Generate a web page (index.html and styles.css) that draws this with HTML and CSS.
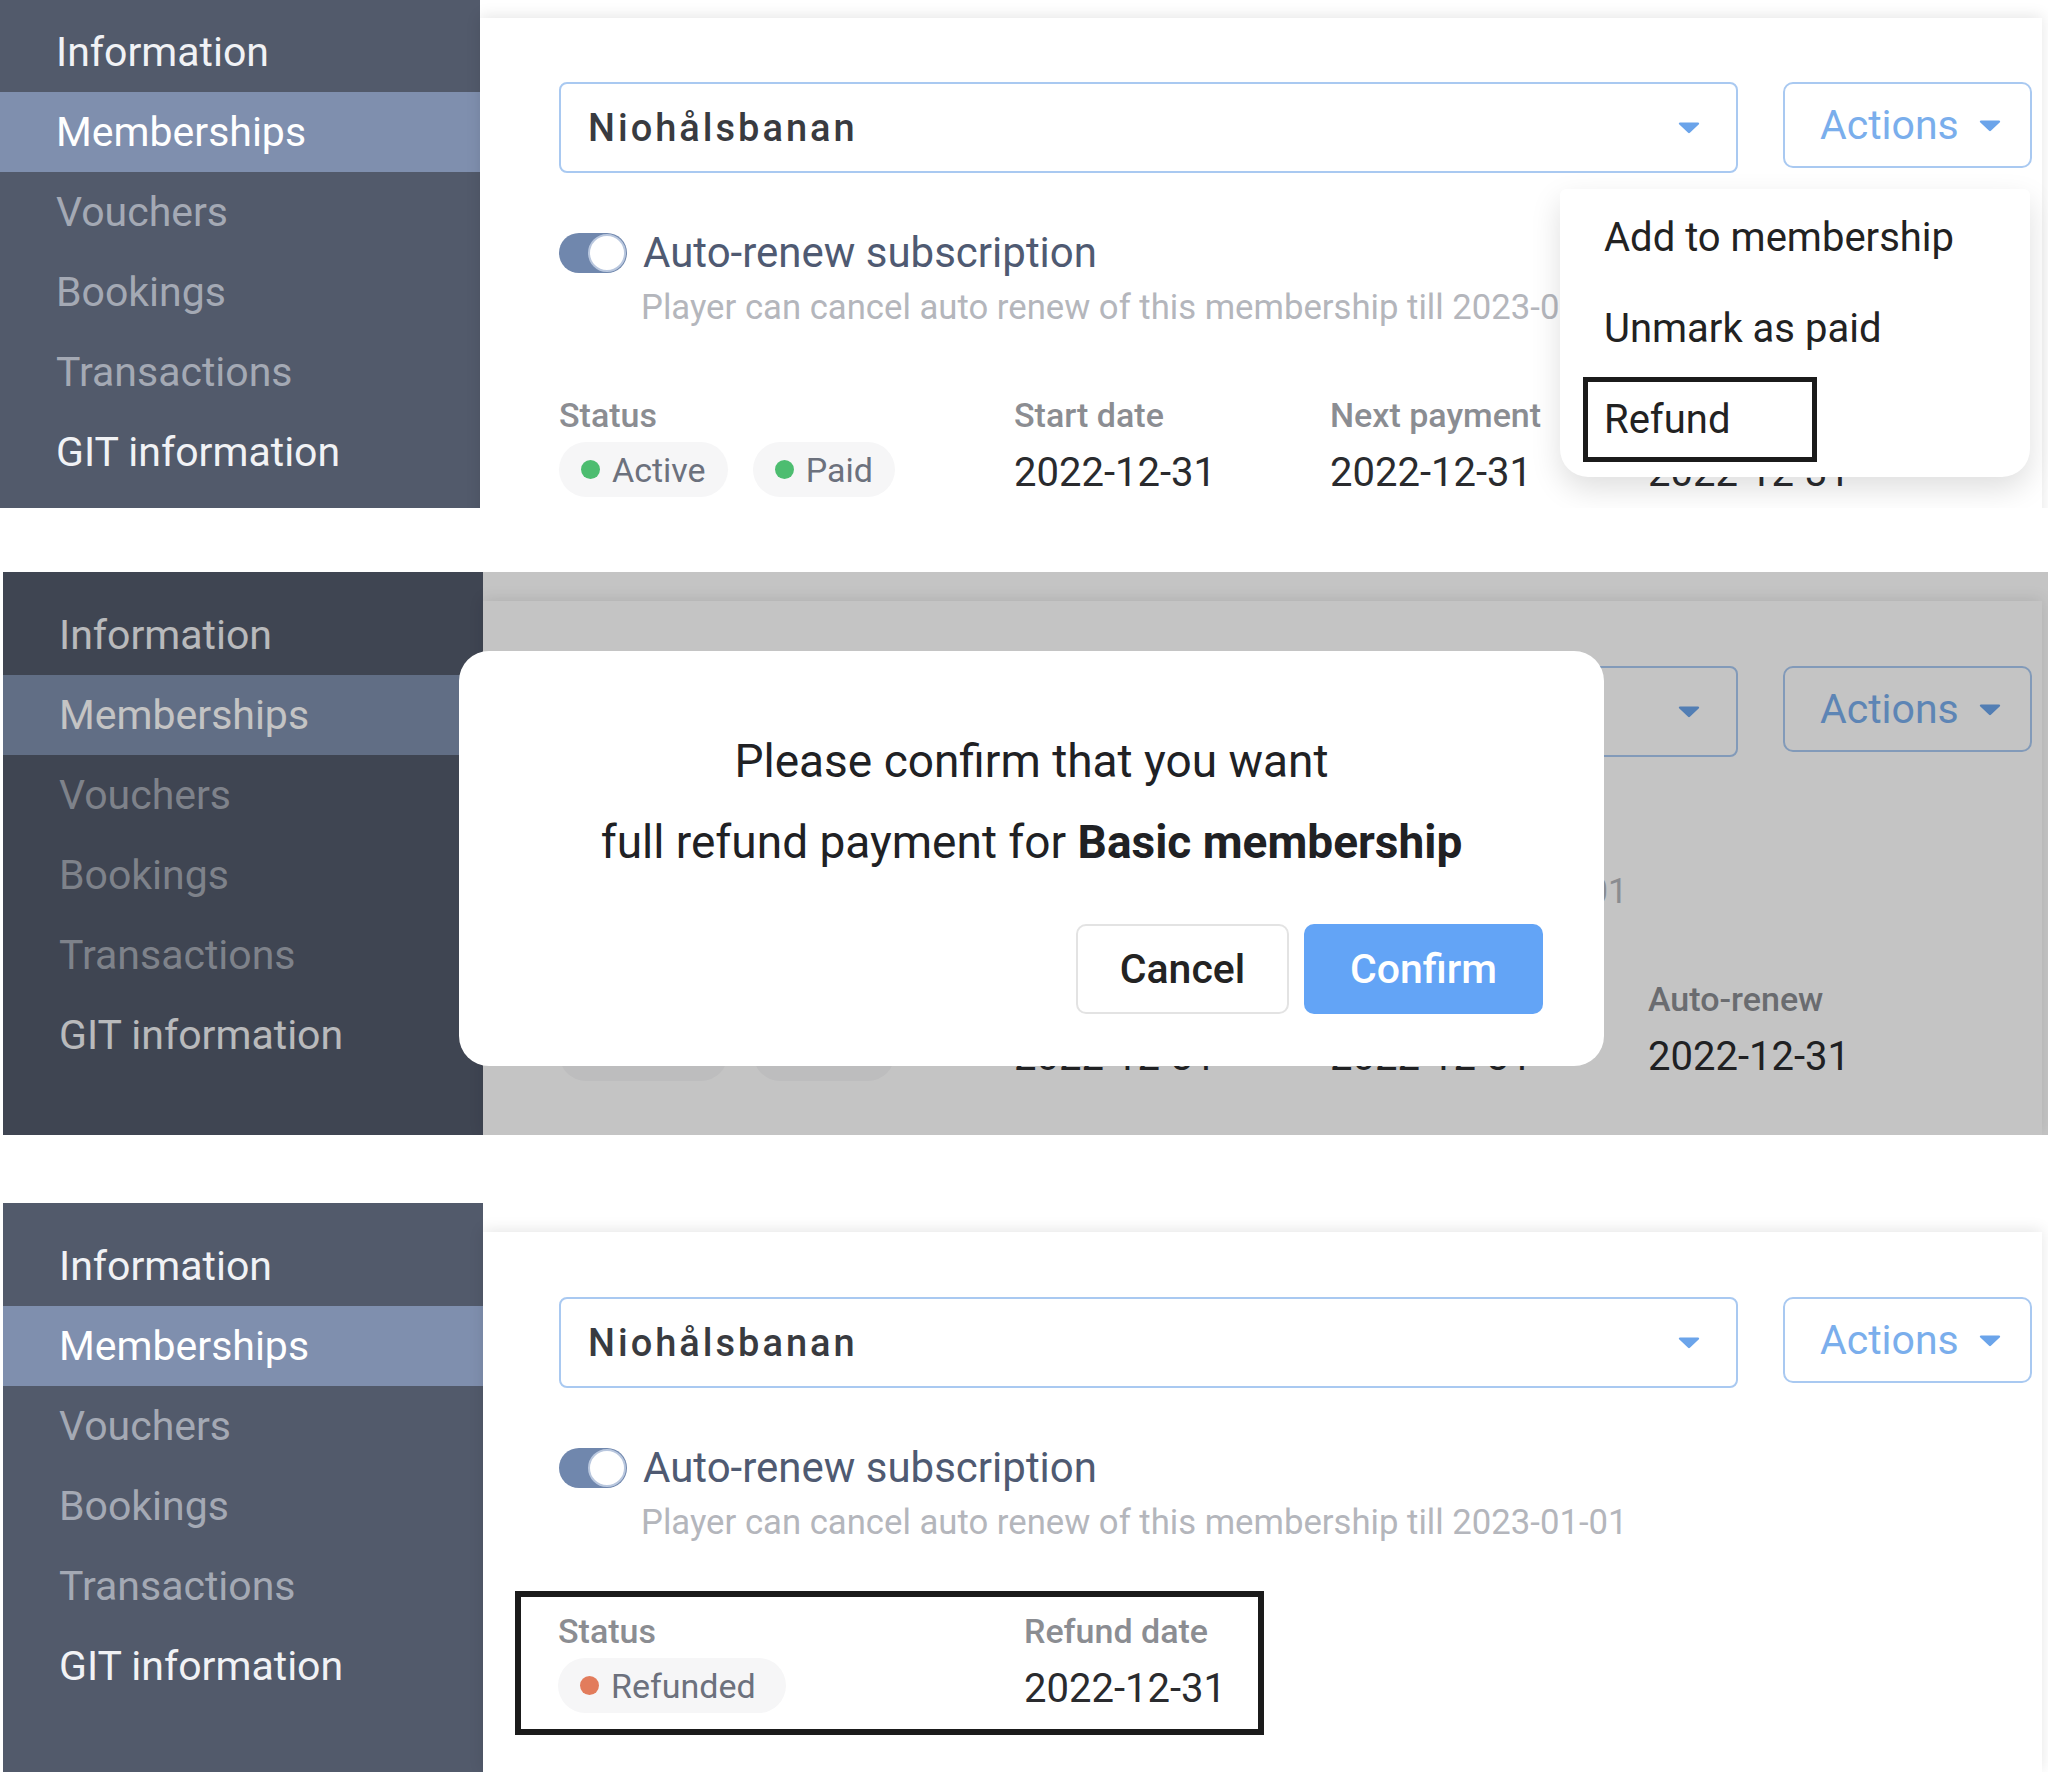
FILE: index.html
```html
<!DOCTYPE html>
<html lang="en">
<head>
  <meta charset="UTF-8" />
  <meta name="viewport" content="width=device-width, initial-scale=1.0"/>
  <title>Memberships – refund flow</title>
  <link rel="stylesheet" href="styles.css">
</head>
<body>

  <!-- step 1: actions menu open -->
  <div class="shot shot-top">
    <section class="panel panel-first">
      <nav class="sidebar">
        <a class="nav-item">Information</a>
        <a class="nav-item active">Memberships</a>
        <a class="nav-item muted">Vouchers</a>
        <a class="nav-item muted">Bookings</a>
        <a class="nav-item muted">Transactions</a>
        <a class="nav-item">GIT information</a>
      </nav>
      <main class="main">
        <div class="card">
          <div class="toolbar">
            <div class="select">
              <span class="select-value">Niohålsbanan</span>
              <svg class="caret" width="22" height="13" viewBox="0 0 22 13"><path d="M2 1.5h18c1 0 1.5 1 .9 1.7l-9 8.6c-.5.5-1.3.5-1.8 0l-9-8.6C.5 2.5 1 1.5 2 1.5z"/></svg>
            </div>
            <div class="actions-wrap">
              <button class="actions">Actions
                <svg class="caret" width="22" height="13" viewBox="0 0 22 13"><path d="M2 1.5h18c1 0 1.5 1 .9 1.7l-9 8.6c-.5.5-1.3.5-1.8 0l-9-8.6C.5 2.5 1 1.5 2 1.5z"/></svg>
              </button>
              <ul class="menu">
                <li class="menu-item">Add to membership</li>
                <li class="menu-item">Unmark as paid</li>
                <li class="menu-item"><span class="marked">Refund</span></li>
              </ul>
            </div>
          </div>
          <div class="renew">
            <span class="toggle"></span>
            <span class="renew-label">Auto-renew subscription</span>
          </div>
          <p class="renew-hint">Player can cancel auto renew of this membership till 2023-01-01</p>
          <div class="details">
            <div class="field">
              <div class="field-label">Status</div>
              <div class="pills">
                <span class="pill"><i class="dot dot-green"></i>Active</span>
                <span class="pill"><i class="dot dot-green"></i>Paid</span>
              </div>
            </div>
            <div class="field">
              <div class="field-label">Start date</div>
              <div class="field-value">2022-12-31</div>
            </div>
            <div class="field">
              <div class="field-label">Next payment</div>
              <div class="field-value">2022-12-31</div>
            </div>
            <div class="field">
              <div class="field-label">Auto-renew</div>
              <div class="field-value">2022-12-31</div>
            </div>
          </div>
        </div>
      </main>
    </section>
  </div>

  <!-- step 2: confirm dialog -->
  <section class="panel panel-shifted panel-dialog">
    <nav class="sidebar">
      <a class="nav-item">Information</a>
      <a class="nav-item active">Memberships</a>
      <a class="nav-item muted">Vouchers</a>
      <a class="nav-item muted">Bookings</a>
      <a class="nav-item muted">Transactions</a>
      <a class="nav-item">GIT information</a>
    </nav>
    <main class="main">
      <div class="card">
        <div class="toolbar">
          <div class="select">
            <span class="select-value">Niohålsbanan</span>
            <svg class="caret" width="22" height="13" viewBox="0 0 22 13"><path d="M2 1.5h18c1 0 1.5 1 .9 1.7l-9 8.6c-.5.5-1.3.5-1.8 0l-9-8.6C.5 2.5 1 1.5 2 1.5z"/></svg>
          </div>
          <div class="actions-wrap">
            <button class="actions">Actions
              <svg class="caret" width="22" height="13" viewBox="0 0 22 13"><path d="M2 1.5h18c1 0 1.5 1 .9 1.7l-9 8.6c-.5.5-1.3.5-1.8 0l-9-8.6C.5 2.5 1 1.5 2 1.5z"/></svg>
            </button>
          </div>
        </div>
        <div class="renew">
          <span class="toggle"></span>
          <span class="renew-label">Auto-renew subscription</span>
        </div>
        <p class="renew-hint">Player can cancel auto renew of this membership till 2023-01-01</p>
        <div class="details">
          <div class="field">
            <div class="field-label">Status</div>
            <div class="pills">
              <span class="pill"><i class="dot dot-green"></i>Active</span>
              <span class="pill"><i class="dot dot-green"></i>Paid</span>
            </div>
          </div>
          <div class="field">
            <div class="field-label">Start date</div>
            <div class="field-value">2022-12-31</div>
          </div>
          <div class="field">
            <div class="field-label">Next payment</div>
            <div class="field-value">2022-12-31</div>
          </div>
          <div class="field">
            <div class="field-label">Auto-renew</div>
            <div class="field-value">2022-12-31</div>
          </div>
        </div>
      </div>
    </main>

    <div class="overlay">
      <div class="modal">
        <p class="modal-text">Please confirm that you want<br>full refund payment for <b>Basic membership</b></p>
        <div class="modal-buttons">
          <button class="btn btn-cancel">Cancel</button>
          <button class="btn btn-confirm">Confirm</button>
        </div>
      </div>
    </div>
  </section>

  <!-- step 3: refunded -->
  <section class="panel panel-shifted panel-last">
    <nav class="sidebar">
      <a class="nav-item">Information</a>
      <a class="nav-item active">Memberships</a>
      <a class="nav-item muted">Vouchers</a>
      <a class="nav-item muted">Bookings</a>
      <a class="nav-item muted">Transactions</a>
      <a class="nav-item">GIT information</a>
    </nav>
    <main class="main">
      <div class="card">
        <div class="toolbar">
          <div class="select">
            <span class="select-value">Niohålsbanan</span>
            <svg class="caret" width="22" height="13" viewBox="0 0 22 13"><path d="M2 1.5h18c1 0 1.5 1 .9 1.7l-9 8.6c-.5.5-1.3.5-1.8 0l-9-8.6C.5 2.5 1 1.5 2 1.5z"/></svg>
          </div>
          <div class="actions-wrap">
            <button class="actions">Actions
              <svg class="caret" width="22" height="13" viewBox="0 0 22 13"><path d="M2 1.5h18c1 0 1.5 1 .9 1.7l-9 8.6c-.5.5-1.3.5-1.8 0l-9-8.6C.5 2.5 1 1.5 2 1.5z"/></svg>
            </button>
          </div>
        </div>
        <div class="renew">
          <span class="toggle"></span>
          <span class="renew-label">Auto-renew subscription</span>
        </div>
        <p class="renew-hint">Player can cancel auto renew of this membership till 2023-01-01</p>
        <div class="details details-refunded">
          <div class="field">
            <div class="field-label">Status</div>
            <div class="pills">
              <span class="pill pill-wide"><i class="dot dot-orange"></i>Refunded</span>
            </div>
          </div>
          <div class="field">
            <div class="field-label">Refund date</div>
            <div class="field-value">2022-12-31</div>
          </div>
        </div>
      </div>
    </main>
  </section>

</body>
</html>
```

FILE: styles.css
```css
:root {
  --sidebar: #525a6b;
  --sidebar-active: #7f8fae;
  --blue: #6ba4ea;
  --blue-border: #a9c9f1;
  --text: #2a2b2e;
  --muted: #8b8d92;
}
body {
  margin: 0;
  width: 2048px;
  background: #fff;
  font-family: Roboto, 'Liberation Sans', sans-serif;
  color: var(--text);
}
button {
  font-family: inherit;
}

/* panels */
.shot-top {
  height: 508px;
  overflow: hidden;
}
.panel {
  position: relative;
  display: flex;
  height: 569px;
  overflow: hidden;
}
.panel-first {
  margin-top: -11px;
}
.panel-first .card {
  padding-top: 64px;
}
.panel-shifted {
  margin-left: 3px;
}
.panel-shifted .card {
  padding-left: 76px;
}
.panel-dialog {
  margin-top: 64px;
  height: 563px;
}
.panel-last {
  margin-top: 68px;
}

/* sidebar */
.sidebar {
  width: 480px;
  flex-shrink: 0;
  padding-top: 23px;
  background: var(--sidebar);
  box-sizing: border-box;
}
.nav-item {
  display: flex;
  align-items: center;
  height: 80px;
  padding-left: 56px;
  font-size: 41px;
  color: #f1f2f5;
}
.nav-item.active {
  background: var(--sidebar-active);
  color: #fff;
}
.nav-item.muted {
  color: #a4a9b4;
}

/* main card */
.main {
  flex: 1;
  padding-top: 29px;
  background: #fff;
}
.card {
  height: 100%;
  margin-right: 6px;
  padding: 65px 10px 0 79px;
  box-sizing: border-box;
  box-shadow: 0 -2px 14px rgba(0,0,0,0.1);
  background: #fff;
}
.toolbar {
  display: flex;
  align-items: flex-start;
  gap: 45px;
}
.select {
  flex: 1;
  display: flex;
  align-items: center;
  justify-content: space-between;
  height: 91px;
  padding: 0 36px 0 27px;
  border: 2px solid var(--blue-border);
  border-radius: 8px;
  box-sizing: border-box;
}
.select-value {
  font-size: 38px;
  font-weight: 500;
  letter-spacing: 3px;
  color: #393b40;
}
.caret {
  fill: var(--blue);
}
.actions-wrap {
  position: relative;
}
.actions {
  display: flex;
  align-items: center;
  gap: 20px;
  width: 249px;
  height: 86px;
  padding: 0 0 0 35px;
  border: 2px solid var(--blue-border);
  border-radius: 10px;
  background: #fff;
  font-size: 41px;
  color: #7aaeec;
  box-sizing: border-box;
}

/* dropdown */
.menu {
  position: absolute;
  top: 107px;
  right: 2px;
  width: 470px;
  margin: 0;
  padding: 3px 0 12px;
  list-style: none;
  background: #fff;
  border-radius: 6px 6px 28px 28px;
  box-shadow: 0 12px 30px rgba(0,0,0,0.13);
  z-index: 2;
}
.menu-item {
  display: flex;
  align-items: center;
  height: 91px;
  padding-left: 44px;
  font-size: 40px;
  color: #222;
}
.marked {
  display: flex;
  align-items: center;
  width: 234px;
  height: 85px;
  margin-left: -21px;
  padding-left: 16px;
  border: 5px solid #1b1b1b;
  box-sizing: border-box;
}

/* auto renew */
.renew {
  display: flex;
  align-items: center;
  gap: 16px;
  margin-top: 55px;
}
.toggle {
  position: relative;
  width: 68px;
  height: 40px;
  border-radius: 20px;
  background: #7087ad;
}
.toggle::after {
  content: '';
  position: absolute;
  top: 1px;
  right: 1px;
  width: 34px;
  height: 34px;
  border: 2px solid #b9c7de;
  border-radius: 50%;
  background: #fff;
}
.renew-label {
  font-size: 42px;
  color: #4f5a72;
}
.renew-hint {
  margin: 10px 0 0;
  padding-left: 82px;
  font-size: 34.7px;
  line-height: 40px;
  color: #b4b6bc;
  white-space: nowrap;
}

/* details */
.details {
  display: grid;
  grid-template-columns: 455px 316px 318px auto;
  margin-top: 70px;
}
.field {
  display: flex;
  flex-direction: column;
  gap: 9px;
}
.field-label {
  font-size: 34px;
  line-height: 36px;
  font-weight: 500;
  color: var(--muted);
}
.field-value {
  font-size: 40px;
  line-height: 55px;
  padding-top: 3px;
  color: var(--text);
}
.pills {
  display: flex;
  gap: 25px;
}
.pill {
  display: flex;
  align-items: center;
  gap: 12px;
  height: 55px;
  padding: 0 22px 0 22px;
  border-radius: 28px;
  background: #f6f6f7;
  font-size: 34px;
  color: #6c717d;
}
.pill-wide {
  padding-right: 30px;
}
.dot {
  width: 19px;
  height: 19px;
  border-radius: 50%;
}
.dot-green {
  background: #4dbd70;
}
.dot-orange {
  background: #e27c5c;
}
.details-refunded {
  grid-template-columns: 466px auto;
  width: max-content;
  margin: 49px 0 0 -44px;
  padding: 16px 32px 13px 37px;
  border: 6px solid #1b1b1b;
}

/* dialog */
.overlay {
  position: absolute;
  inset: 0;
  background: rgba(0,0,0,0.23);
}
.modal {
  position: absolute;
  top: 79px;
  left: 456px;
  width: 1145px;
  height: 415px;
  padding: 70px 61px 0 0;
  border-radius: 30px;
  background: #fff;
  box-sizing: border-box;
}
.modal-text {
  margin: 0 0 0 61px;
  text-align: center;
  font-size: 46px;
  line-height: 81px;
  color: #202124;
}
.modal-text b {
  font-weight: 700;
}
.modal-buttons {
  display: flex;
  justify-content: flex-end;
  gap: 15px;
  margin-top: 41px;
}
.btn {
  height: 90px;
  border-radius: 10px;
  font-size: 41px;
  font-weight: 500;
}
.btn-cancel {
  width: 213px;
  border: 2px solid #e3e3e3;
  background: #fff;
  color: #232323;
}
.btn-confirm {
  width: 239px;
  border: none;
  background: #63a4f6;
  color: #fff;
}
```
